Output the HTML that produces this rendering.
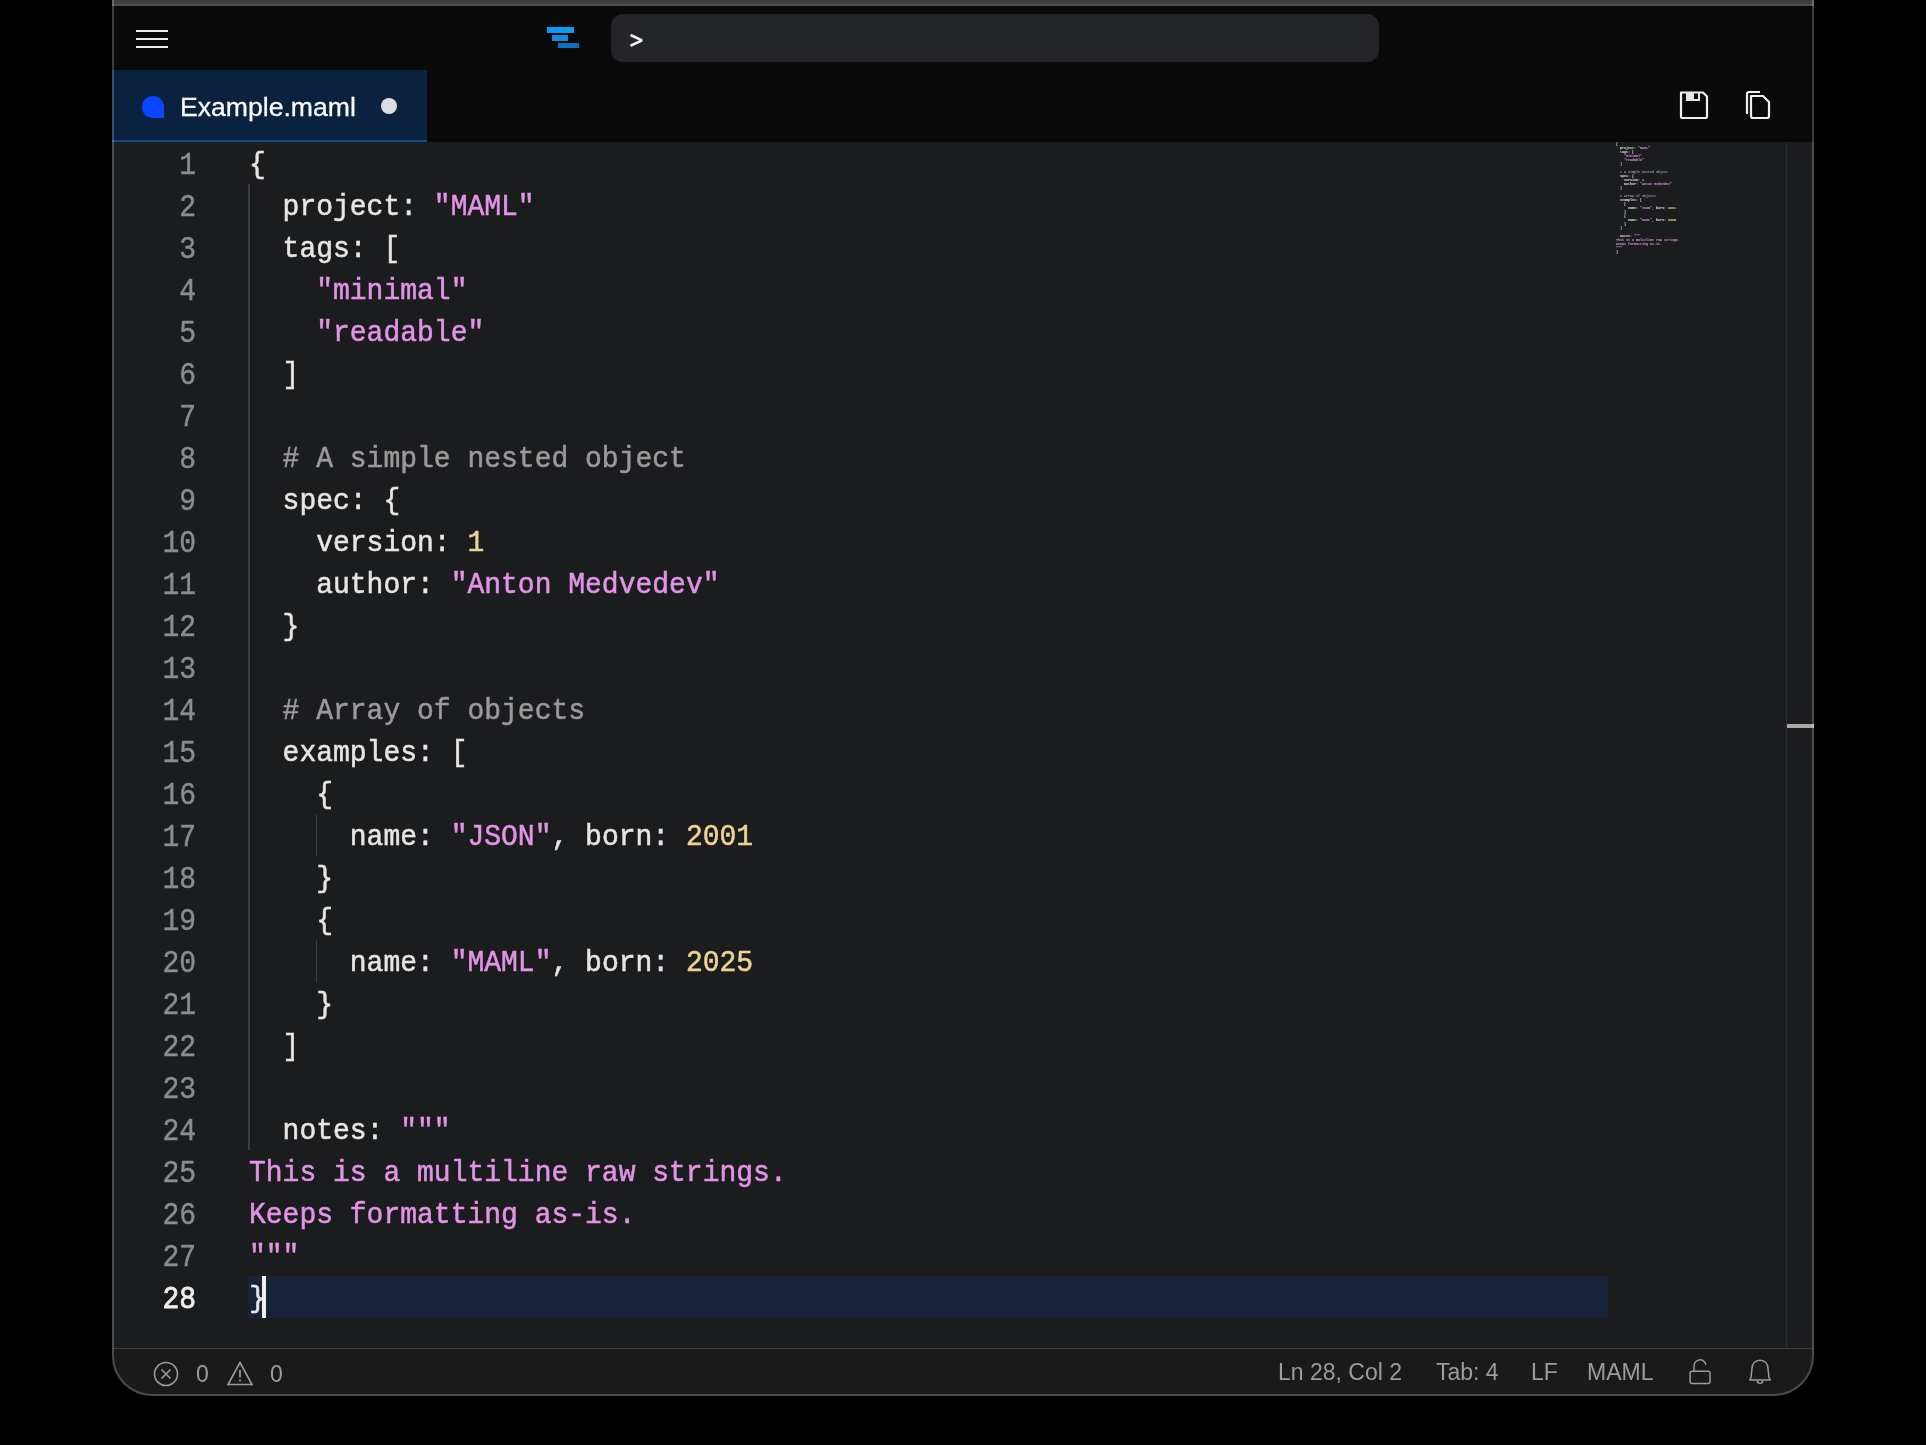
<!DOCTYPE html>
<html><head><meta charset="utf-8">
<style>
.cl,.ln,.sb,.mini,.tt{will-change:transform;}
html,body{margin:0;padding:0;background:#000;width:1926px;height:1445px;overflow:hidden;position:relative;}
*{box-sizing:border-box;}
.abs{position:absolute;}
#win{position:absolute;left:112px;top:0;width:1702px;height:1396px;background:#0a0a0a;border-radius:0 0 40px 40px;overflow:hidden;}
#inner{position:absolute;left:2px;top:0;width:1698px;height:1396px;}
#frame{position:absolute;left:112px;top:0;width:1702px;height:1396px;border:2px solid rgba(255,255,255,0.21);border-top:none;border-radius:0 0 40px 40px;}
#topband{position:absolute;left:112px;top:0;width:1702px;height:6px;background:#404040;border-bottom:2px solid #4e4e4e;}
#editor{position:absolute;left:-2px;top:142px;width:1702px;height:1206px;background:#1b1c1e;border-left:2px solid #1b1c1e;border-right:2px solid #1b1c1e;}
#status{position:absolute;left:-2px;top:1348px;width:1702px;height:48px;background:#1a1a1b;border-left:2px solid #1a1a1b;border-right:2px solid #1a1a1b;border-top:1px solid #3a3b3d;}
.cl{position:absolute;left:135px;height:42px;font-family:"Liberation Mono",monospace;font-size:28px;line-height:42px;white-space:pre;-webkit-text-stroke:0.5px currentColor;transform-origin:0 28px;transform:scaleY(1.05);}
.mini{position:absolute;font-family:"Liberation Mono",monospace;font-size:28px;line-height:42px;white-space:pre;}
.k{color:#e6e6e6}.s{color:#e394e6}.n{color:#eed394}.c{color:#9a9a9c}.p{color:#e6e6e6}
.ln{position:absolute;left:0;width:82px;height:42px;text-align:right;font-family:"Liberation Mono",monospace;font-size:28px;line-height:42px;color:#8a8c90;-webkit-text-stroke:0.4px currentColor;transform-origin:0 10px;transform:scaleY(1.14);}
.ln.cur{color:#ededed;-webkit-text-stroke:0.7px #ededed}
.sb{font-family:"Liberation Sans",sans-serif;font-size:23px;color:#9c9c9c;position:absolute;top:10px;line-height:26px;white-space:pre;}
</style></head><body>
<div id="win"><div id="inner">
  <div class="abs" style="left:22px;top:30px;width:32px;height:2px;background:#eee"></div>
  <div class="abs" style="left:22px;top:38px;width:32px;height:2px;background:#eee"></div>
  <div class="abs" style="left:22px;top:46px;width:32px;height:2px;background:#eee"></div>
  <div class="abs" style="left:433px;top:27px;width:27px;height:6px;background:#0b9bf6"></div>
  <div class="abs" style="left:438px;top:35px;width:16px;height:6px;background:#1a86d8"></div>
  <div class="abs" style="left:444px;top:43px;width:21px;height:5px;background:#0d70c0"></div>
  <div class="abs" style="left:497px;top:14px;width:768px;height:48px;background:#242529;border-radius:12px;"></div>
  <svg class="abs" style="left:511px;top:30px" width="24" height="22" viewBox="0 0 24 22"><path d="M5.5 5L17 10.4L5.5 15.8" fill="none" stroke="#f2f2f2" stroke-width="2.6" stroke-linejoin="bevel"/></svg>
  <div class="abs" style="left:-2px;top:70px;width:315px;height:72px;background:#0a2240;border-bottom:2px solid #114d88"></div>
  <div class="abs" style="left:28px;top:96px;width:21.5px;height:21.5px;background:#0a45ff;border-radius:10.75px 10.75px 0 10.75px"></div>
  <div class="abs tt" style="left:66px;top:89px;font-family:'Liberation Sans',sans-serif;font-size:26.6px;line-height:36px;color:#fafafa;-webkit-text-stroke:0.3px #fafafa">Example.maml</div>
  <div class="abs" style="left:267px;top:98px;width:16px;height:16px;background:#dcdcdf;border-radius:50%"></div>
  <svg class="abs" style="left:1560px;top:85px" width="110" height="40" viewBox="0 0 110 40" fill="none" stroke="#efefef" stroke-width="2.2">
    <path d="M7 7.5H29L33 11.5V32Q33 33 32 33H8Q7 33 7 32Z" stroke-linejoin="round"/>
    <rect x="12" y="7" width="14" height="9" fill="#e6e6e6" stroke="none"/>
    <rect x="20" y="8.5" width="4" height="5.5" fill="#0a0a0a" stroke="none"/>
    <path d="M73 29V9Q73 7 75 7H86"/>
    <path d="M77 11H89L95 17V31Q95 33 93 33H79Q77 33 77 31Z" stroke-linejoin="round"/>
  </svg>
  <div id="editor">
    <div class="abs" style="left:134px;top:1134px;width:1360px;height:42px;background:#172339"></div>
    <div class="abs" style="left:134px;top:42px;width:2px;height:966px;background:#3c3d40"></div>
    <div class="abs" style="left:202px;top:672px;width:1px;height:42px;background:#3c3d40"></div>
    <div class="abs" style="left:202px;top:798px;width:1px;height:42px;background:#3c3d40"></div>
<div class="ln" style="top:1px">1</div>
<div class="ln" style="top:43px">2</div>
<div class="ln" style="top:85px">3</div>
<div class="ln" style="top:127px">4</div>
<div class="ln" style="top:169px">5</div>
<div class="ln" style="top:211px">6</div>
<div class="ln" style="top:253px">7</div>
<div class="ln" style="top:295px">8</div>
<div class="ln" style="top:337px">9</div>
<div class="ln" style="top:379px">10</div>
<div class="ln" style="top:421px">11</div>
<div class="ln" style="top:463px">12</div>
<div class="ln" style="top:505px">13</div>
<div class="ln" style="top:547px">14</div>
<div class="ln" style="top:589px">15</div>
<div class="ln" style="top:631px">16</div>
<div class="ln" style="top:673px">17</div>
<div class="ln" style="top:715px">18</div>
<div class="ln" style="top:757px">19</div>
<div class="ln" style="top:799px">20</div>
<div class="ln" style="top:841px">21</div>
<div class="ln" style="top:883px">22</div>
<div class="ln" style="top:925px">23</div>
<div class="ln" style="top:967px">24</div>
<div class="ln" style="top:1009px">25</div>
<div class="ln" style="top:1051px">26</div>
<div class="ln" style="top:1093px">27</div>
<div class="ln cur" style="top:1135px">28</div>
<div class="cl" style="top:2.5px"><span class="p">{</span></div>
<div class="cl" style="top:44.5px"><span class="k">  project: </span><span class="s">"MAML"</span></div>
<div class="cl" style="top:86.5px"><span class="k">  tags: [</span></div>
<div class="cl" style="top:128.5px"><span class="s">    "minimal"</span></div>
<div class="cl" style="top:170.5px"><span class="s">    "readable"</span></div>
<div class="cl" style="top:212.5px"><span class="p">  ]</span></div>
<div class="cl" style="top:296.5px"><span class="c">  # A simple nested object</span></div>
<div class="cl" style="top:338.5px"><span class="k">  spec: {</span></div>
<div class="cl" style="top:380.5px"><span class="k">    version: </span><span class="n">1</span></div>
<div class="cl" style="top:422.5px"><span class="k">    author: </span><span class="s">"Anton Medvedev"</span></div>
<div class="cl" style="top:464.5px"><span class="p">  }</span></div>
<div class="cl" style="top:548.5px"><span class="c">  # Array of objects</span></div>
<div class="cl" style="top:590.5px"><span class="k">  examples: [</span></div>
<div class="cl" style="top:632.5px"><span class="p">    {</span></div>
<div class="cl" style="top:674.5px"><span class="k">      name: </span><span class="s">"JSON"</span><span class="k">, born: </span><span class="n">2001</span></div>
<div class="cl" style="top:716.5px"><span class="p">    }</span></div>
<div class="cl" style="top:758.5px"><span class="p">    {</span></div>
<div class="cl" style="top:800.5px"><span class="k">      name: </span><span class="s">"MAML"</span><span class="k">, born: </span><span class="n">2025</span></div>
<div class="cl" style="top:842.5px"><span class="p">    }</span></div>
<div class="cl" style="top:884.5px"><span class="p">  ]</span></div>
<div class="cl" style="top:968.5px"><span class="k">  notes: </span><span class="s">"""</span></div>
<div class="cl" style="top:1010.5px"><span class="s">This is a multiline raw strings.</span></div>
<div class="cl" style="top:1052.5px"><span class="s">Keeps formatting as-is.</span></div>
<div class="cl" style="top:1094.5px"><span class="s">"""</span></div>
<div class="cl" style="top:1136.5px"><span class="p">}</span></div>
    <div class="abs" style="left:148px;top:1134px;width:4px;height:42px;background:#f0f0f0"></div>
    <div class="mini" style="left:1502px;top:0px;font-weight:bold;transform-origin:0 0;transform:scale(0.119,0.0952)"><span class="p">{</span>
<span class="k">  project: </span><span class="s">"MAML"</span>
<span class="k">  tags: [</span>
<span class="s">    "minimal"</span>
<span class="s">    "readable"</span>
<span class="p">  ]</span>

<span class="c">  # A simple nested object</span>
<span class="k">  spec: {</span>
<span class="k">    version: </span><span class="n">1</span>
<span class="k">    author: </span><span class="s">"Anton Medvedev"</span>
<span class="p">  }</span>

<span class="c">  # Array of objects</span>
<span class="k">  examples: [</span>
<span class="p">    {</span>
<span class="k">      name: </span><span class="s">"JSON"</span><span class="k">, born: </span><span class="n">2001</span>
<span class="p">    }</span>
<span class="p">    {</span>
<span class="k">      name: </span><span class="s">"MAML"</span><span class="k">, born: </span><span class="n">2025</span>
<span class="p">    }</span>
<span class="p">  ]</span>

<span class="k">  notes: </span><span class="s">"""</span>
<span class="s">This is a multiline raw strings.</span>
<span class="s">Keeps formatting as-is.</span>
<span class="s">"""</span>
<span class="p">}</span></div>
    <div class="abs" style="left:1672px;top:0;width:1px;height:1206px;background:#2c2d30"></div>
    <div class="abs" style="left:1673px;top:582px;width:27px;height:4px;background:#a9a9aa"></div>
  </div>
  <div id="status">
    <svg class="abs" style="left:38px;top:11px" width="28" height="28" viewBox="0 0 28 28"><circle cx="14" cy="14" r="11.5" fill="none" stroke="#9a9a9a" stroke-width="1.6"/><path d="M9.5 9.5L18.5 18.5M18.5 9.5L9.5 18.5" stroke="#9a9a9a" stroke-width="1.6"/></svg>
    <div class="sb" style="left:82px;top:12px">0</div>
    <svg class="abs" style="left:112px;top:11px" width="28" height="28" viewBox="0 0 28 28"><path d="M14 2.5L26 24.5H2Z" fill="none" stroke="#9a9a9a" stroke-width="1.6" stroke-linejoin="miter"/><path d="M14 10V17.5" stroke="#9a9a9a" stroke-width="1.8"/><circle cx="14" cy="20.5" r="1" fill="#9a9a9a"/></svg>
    <div class="sb" style="left:156px;top:12px">0</div>
    <div class="sb" style="left:1164px">Ln 28, Col 2</div>
    <div class="sb" style="left:1322px">Tab: 4</div>
    <div class="sb" style="left:1417px">LF</div>
    <div class="sb" style="left:1473px">MAML</div>
    <svg class="abs" style="left:1573px;top:9px" width="26" height="30" viewBox="0 0 26 30"><path d="M7 13.3V8.8A6 6 0 0 1 18.9 6.9" fill="none" stroke="#9a9a9a" stroke-width="1.5"/><rect x="3.1" y="13.3" width="19.9" height="12.3" rx="2" fill="none" stroke="#9a9a9a" stroke-width="1.5"/></svg>
    <svg class="abs" style="left:1633px;top:9px" width="26" height="30" viewBox="0 0 26 30"><path d="M13 2.2C17.6 2.2 21 5.6 21 10.3L21.9 19.3L23.3 22H2.7L4.1 19.3L5 10.3C5 5.6 8.4 2.2 13 2.2Z" fill="none" stroke="#9a9a9a" stroke-width="1.5" stroke-linejoin="round"/><path d="M10.2 22.6A2.8 2.8 0 0 0 15.8 22.6" fill="none" stroke="#9a9a9a" stroke-width="1.5"/></svg>
  </div>
</div></div>
<div id="topband"></div>
<div id="frame"></div>
</body></html>
